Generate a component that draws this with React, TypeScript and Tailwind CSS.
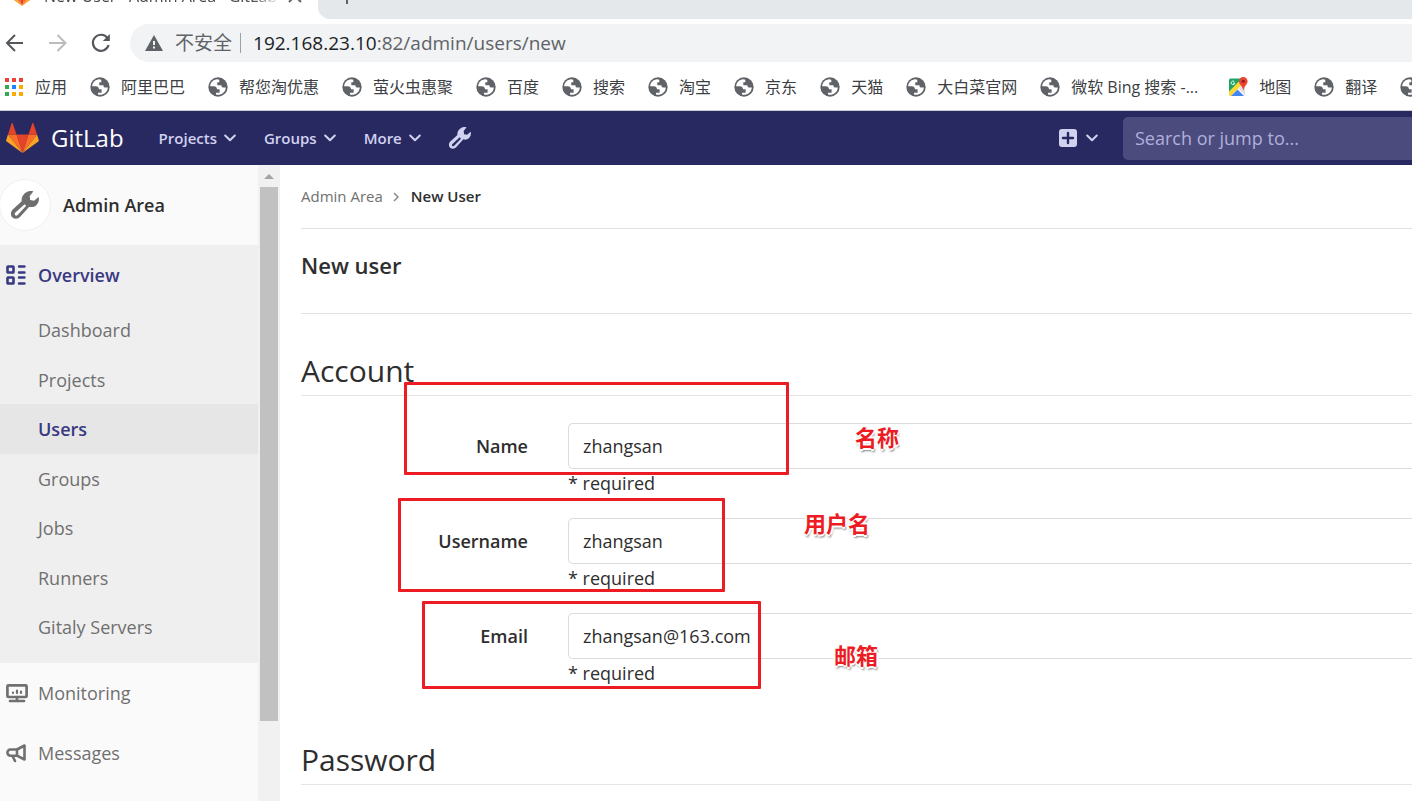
import type { ReactNode } from "react";
import clsx from "clsx";

type Bookmark = { label: string; icon?: "globe" | "maps"; wide?: boolean };

const bookmarks: Bookmark[] = [
  { label: "阿里巴巴" },
  { label: "帮您淘优惠" },
  { label: "萤火虫惠聚" },
  { label: "百度" },
  { label: "搜索" },
  { label: "淘宝" },
  { label: "京东" },
  { label: "天猫" },
  { label: "大白菜官网" },
  { label: "微软 Bing 搜索 -...", wide: true },
  { label: "地图", icon: "maps" },
  { label: "翻译" },
  { label: "新闻" },
];

const overviewLinks = ["Dashboard", "Projects", "Users", "Groups", "Jobs", "Runners", "Gitaly Servers"];

const appColors = [
  "#ea4335", "#ea4335", "#ea4335",
  "#34a853", "#1a85ff", "#f9ab00",
  "#34a853", "#f9ab00", "#f9ab00",
];

function GlobeIcon() {
  return (
    <svg viewBox="0 0 20 20" className="size-5 shrink-0" aria-hidden="true">
      <circle cx="10" cy="10" r="9.7" fill="#5f6368" />
      <path
        d="M9.2 2.2C5.300 2.400 2.200 5.600 2.200 9.300h3.500c1.900 0 3.300 1.200 3.300 3h2.600v3.400H8v1.900c4.700 1.200 9.600-2.300 9.800-7.200h-3c-.8 0-1.300-.6-1.300-1.400V8.200H9.300V5.300h2V3.200c0-.5-.9-.9-2.100-1z"
        fill="#fff"
      />
    </svg>
  );
}

function MapsIcon() {
  return (
    <svg viewBox="0 0 20 20" className="size-5 shrink-0" aria-hidden="true">
      <path d="M1 3a1.500 1.500 0 0 1 1.500-1.500H14L1 16z" fill="#1fa463" />
      <path d="M1 18V14.500L12.500 3l3 3L3 19H2a1 1 0 0 1-1-1z" fill="#fdd835" />
      <path d="M3 19l6.500-6.500L16 19z" fill="#4285f4" />
      <path d="M10.500 11.500L17 6v12.500z" fill="#dfe1e5" />
      <path d="M15.300 0a4.300 4.300 0 0 0-4.300 4.300c0 3.300 3.700 4.600 4.300 9.700.6-5.100 4.300-6.400 4.300-9.700A4.300 4.300 0 0 0 15.300 0z" fill="#ea4335" />
      <circle cx="15.300" cy="4.300" r="1.500" fill="#8c1f16" />
      <path d="M6.300 4.600A1.800 1.800 0 1 0 6.800 6.200H5" fill="none" stroke="#fff" strokeWidth=".9" />
    </svg>
  );
}

function Tanuki({ className }: { className?: string }) {
  return (
    <svg viewBox="0 0 36 33" className={className} aria-hidden="true">
      <path d="M18 33l6.600-20.400H11.400z" fill="#e24329" />
      <path d="M18 33l-6.600-20.400H2z" fill="#fc6d26" />
      <path d="M2 12.600L.1 18.700a1.400 1.400 0 0 0 .5 1.600L18 33z" fill="#fca326" />
      <path d="M2 12.600h9.400L7.300.5c-.2-.7-1.200-.7-1.400 0z" fill="#e24329" />
      <path d="M18 33l6.600-20.400H34z" fill="#fc6d26" />
      <path d="M34 12.600l1.900 6.100a1.400 1.400 0 0 1-.5 1.600L18 33z" fill="#fca326" />
      <path d="M34 12.600h-9.400L28.700.5c.2-.7 1.200-.7 1.400 0z" fill="#e24329" />
    </svg>
  );
}

function WrenchIcon({ className }: { className?: string }) {
  return (
    <svg viewBox="0 0 28 28" className={className} fill="currentColor" fillRule="evenodd" aria-hidden="true">
      <path d="M22.300.4l-3.600 4.700.5 4 3.900.7L27.600 6c1.200 4.100-1.200 8.900-5.400 9.900-1.500.3-2.700.2-3.900-.2l-8.900 9.900c-2.200 2.600-5.600 2.900-7.900.9-2.300-2.200-2.100-5.700.2-7.900l9-8.400C10.100 5.700 13.500 1.300 17.800.3c1.500-.3 3.100-.3 4.500.1zM13.600 13.200L4.400 21.600c-.9.9-.9 1.900-.2 2.600.7.600 1.700.600 2.400-.2l8.600-9.200z" />
    </svg>
  );
}

function OverviewIcon() {
  return (
    <svg viewBox="0 0 20 20" className="size-5 shrink-0" fill="none" stroke="currentColor" strokeWidth="2.600" strokeLinecap="round" aria-hidden="true">
      <rect x="1.500" y="1.500" width="6" height="6" rx=".6" />
      <rect x="1.500" y="12.500" width="6" height="6" rx=".6" />
      <path d="M13 1.500h5.500M13 7.500h5.500M13 12.500h5.500M13 18.500h5.500" strokeWidth="2.400" />
    </svg>
  );
}

function MonitorIcon() {
  return (
    <svg viewBox="0 0 22 20" className="h-5 w-[22px] shrink-0" fill="none" stroke="currentColor" strokeLinecap="round" aria-hidden="true">
      <rect x="1.400" y="2.400" width="19.200" height="11.600" rx="1" strokeWidth="2.700" />
      <path d="M11 14v3M4 18h14" strokeWidth="2.700" />
      <path d="M7 10v-.3M11 10V7.500M15 10V8.700" strokeWidth="2.200" />
    </svg>
  );
}

function MegaphoneIcon() {
  return (
    <svg viewBox="0 0 20 20" className="size-5 shrink-0" fill="none" stroke="currentColor" strokeWidth="2.600" strokeLinejoin="round" strokeLinecap="round" aria-hidden="true">
      <path d="M11 6.500L18.500 2.500v14L11 12.700z" />
      <path d="M11 6.500H4.500a2.500 2.500 0 0 0 0 6.200H11M6.500 13l2.500 5" />
    </svg>
  );
}

function ChevronDown() {
  return (
    <svg viewBox="0 0 12 8" className="h-2 w-3" fill="none" stroke="currentColor" strokeWidth="2" strokeLinecap="round" strokeLinejoin="round" aria-hidden="true">
      <path d="M1.200 1.500L6 6.300l4.800-4.800" />
    </svg>
  );
}

function BrowserChrome() {
  return (
    <div className="bg-white">
      <div className="flex h-[19px] overflow-hidden">
        <div className="flex w-[318px] shrink-0 items-start pl-3">
          <Tanuki className="-mt-3 h-[18px] w-5 shrink-0" />
          <span className="-mt-4 ml-3 w-[236px] overflow-hidden text-base leading-6 whitespace-nowrap text-[#45484c] [mask-image:linear-gradient(to_right,#000_88%,transparent)]">
            New User · Admin Area · GitLab
          </span>
          <button aria-label="Close tab" className="-mt-[11px] ml-2 text-[#5f6368]">
            <svg viewBox="0 0 14 14" className="size-3.5" stroke="currentColor" strokeWidth="2" aria-hidden="true">
              <path d="M1 1l12 12M13 1L1 13" />
            </svg>
          </button>
        </div>
        <div className="flex grow items-start rounded-bl-xl bg-[#e4e8eb] pl-[21px]">
          <button aria-label="New tab" className="-mt-3 text-[#5f6368]">
            <svg viewBox="0 0 16 16" className="size-4" stroke="currentColor" strokeWidth="2" aria-hidden="true">
              <path d="M8 0v16M0 8h16" />
            </svg>
          </button>
        </div>
      </div>

      <div className="flex items-center py-[5px] pl-[5px]">
        <button aria-label="Back" className="text-[#54575b]">
          <svg viewBox="0 0 20 20" className="size-5" fill="none" stroke="currentColor" strokeWidth="2" aria-hidden="true">
            <path d="M18 10H2M10 2l-8 8 8 8" />
          </svg>
        </button>
        <button aria-label="Forward" className="ml-[23px] text-[#babcbe]">
          <svg viewBox="0 0 20 20" className="size-5" fill="none" stroke="currentColor" strokeWidth="2" aria-hidden="true">
            <path d="M1 10h16M9.500 2l8 8-8 8" />
          </svg>
        </button>
        <button aria-label="Reload" className="ml-[23px] text-[#54575b]">
          <svg viewBox="0 0 20 20" className="size-5" fill="none" stroke="currentColor" strokeWidth="2.200" aria-hidden="true">
            <path d="M16.500 5.200A8 8 0 1 0 17.600 12" />
            <path d="M18.800 1v7h-7z" fill="currentColor" stroke="none" />
          </svg>
        </button>
        <div className="ml-[19px] flex h-[38px] grow items-center rounded-l-full bg-[#f1f3f4] pl-[15px] text-[19px] leading-6">
          <svg viewBox="0 0 18 16" className="h-4 w-[18px]" aria-hidden="true">
            <path d="M9 0l9 16H0z" fill="#5f6368" />
            <path d="M8 6h2v4H8zM8 11.500h2v2H8z" fill="#f1f3f4" />
          </svg>
          <span className="ml-3 text-[#5f6368]">不安全</span>
          <span className="ml-2 mr-3 h-5 w-px bg-[#9aa0a6]" />
          <span className="text-[#5f6368]">
            <span className="text-[#202124]">192.168.23.10</span>:82/admin/users/new
          </span>
        </div>
      </div>

      <nav aria-label="Bookmarks" className="flex h-[43px] items-center gap-[23px] overflow-hidden pb-1 pl-[5px] text-base text-[#3c4043]">
        <a href="#" className="flex shrink-0 items-center gap-3">
          <span className="grid grid-cols-3 gap-[3px]">
            {appColors.map((color, i) => (
              <span key={i} className="size-1" style={{ backgroundColor: color }} />
            ))}
          </span>
          应用
        </a>
        {bookmarks.map((bookmark) => (
          <a
            key={bookmark.label}
            href="#"
            className={clsx("flex shrink-0 items-center gap-[11px] whitespace-nowrap", bookmark.wide && "w-[165px]")}
          >
            {bookmark.icon === "maps" ? <MapsIcon /> : <GlobeIcon />}
            {bookmark.label}
          </a>
        ))}
      </nav>
    </div>
  );
}

function NavMenu({ label }: { label: string }) {
  return (
    <button className="flex items-center gap-[7px] text-[15px] font-semibold">
      {label}
      <ChevronDown />
    </button>
  );
}

function Header() {
  return (
    <header className="flex h-[55px] items-center overflow-hidden border-t border-[#c9cad6] bg-[#292961] pl-1.5 text-[#d1d1f0]">
      <a href="#" className="flex shrink-0 items-center gap-3 text-white">
        <Tanuki className="h-[30px] w-[33px]" />
        <span className="text-2xl">GitLab</span>
      </a>
      <nav aria-label="Main" className="ml-[35px] flex shrink-0 items-center gap-7">
        <NavMenu label="Projects" />
        <NavMenu label="Groups" />
        <NavMenu label="More" />
        <a href="#" aria-label="Admin Area">
          <WrenchIcon className="size-[22px]" />
        </a>
      </nav>
      <button aria-label="New..." className="ml-auto flex shrink-0 items-center gap-[9px]">
        <svg viewBox="0 0 18 18" className="size-[18px]" aria-hidden="true">
          <rect width="18" height="18" rx="3" fill="currentColor" />
          <path d="M9 4v10M4 9h10" stroke="#292961" strokeWidth="2.400" strokeLinecap="round" />
        </svg>
        <ChevronDown />
      </button>
      <input
        type="search"
        aria-label="Search or jump to"
        placeholder="Search or jump to..."
        className="ml-[25px] h-[43px] w-[289px] shrink-0 rounded-l-[5px] bg-[#4b4b7d] px-3 text-lg placeholder:text-[#b0b0dc]"
      />
    </header>
  );
}

function SidebarItem({ icon, label }: { icon: ReactNode; label: string }) {
  return (
    <a href="#" className="flex h-[60px] items-center text-lg text-[#707070]">
      <span className="flex w-8">{icon}</span>
      {label}
    </a>
  );
}

function Sidebar() {
  return (
    <aside className="w-[258px] shrink-0 bg-[#fafafa]">
      <a href="#" className="flex h-20 items-center gap-3 text-lg font-semibold text-[#2e2e2e]">
        <span className="-ml-px flex size-[52px] items-center justify-center rounded-full border border-[#f0f0f0] bg-white text-[#6e6e6e]">
          <WrenchIcon className="size-7" />
        </span>
        Admin Area
      </a>
      <div className="bg-[#efefef] pb-[11px]">
        <a href="#" className="flex h-[60px] items-center pl-1.5 text-lg font-semibold text-[#393982]">
          <span className="w-8">
            <OverviewIcon />
          </span>
          Overview
        </a>
        <ul className="text-lg">
          {overviewLinks.map((label) => (
            <li key={label} className="h-[50px] even:h-[49px]">
              <a
                href="#"
                className={clsx(
                  "flex h-full items-center pl-[38px]",
                  label === "Users" ? "bg-[#e6e6e6] font-semibold text-[#393982]" : "text-[#707070]",
                )}
              >
                {label}
              </a>
            </li>
          ))}
        </ul>
      </div>
      <div className="pl-1.5">
        <SidebarItem icon={<MonitorIcon />} label="Monitoring" />
        <SidebarItem icon={<MegaphoneIcon />} label="Messages" />
      </div>
    </aside>
  );
}

function ScrollTrack() {
  return (
    <div className="w-[22px] shrink-0 bg-[#f1f1f1] px-0.5" aria-hidden="true">
      <svg viewBox="0 0 18 22" className="h-[22px] w-[18px]">
        <path d="M4 14l5-5 5 5z" fill="#a3a3a3" />
      </svg>
      <div className="h-[534px] w-[18px] bg-[#c1c1c1]" />
    </div>
  );
}

type FieldProps = {
  id: string;
  label: string;
  value: string;
  type?: string;
  outline: string;
  note: string;
  notePosition: string;
};

function Field({ id, label, value, type = "text", outline, note, notePosition }: FieldProps) {
  return (
    <div className="relative flex text-lg text-[#2e2e2e]">
      <label htmlFor={id} className="w-[227px] shrink-0 pt-[9px] text-right leading-7 font-semibold">
        {label}
      </label>
      <div className="ml-10 grow">
        <input
          id={id}
          type={type}
          defaultValue={value}
          className="block h-[46px] w-full rounded-l-[5px] border border-r-0 border-[#dbdbdb] bg-white px-3.5"
        />
        <span className="block h-7 leading-7">* required</span>
      </div>
      {/* Annotation box and its caption lie over the row */}
      <div className={clsx("pointer-events-none absolute rounded-[1px] border-3 border-[#ed1c24]", outline)} />
      <span
        className={clsx(
          "pointer-events-none absolute text-[22px] leading-8 font-bold whitespace-nowrap text-[#ed1c24] [text-shadow:-2px_0_#fff,2px_0_#fff,0_-2px_#fff,0_2px_#fff,1px_3px_2px_#888]",
          notePosition,
        )}
      >
        {note}
      </span>
    </div>
  );
}

function Content() {
  return (
    <main className="min-w-0 grow pl-[21px] text-[#2e2e2e]">
      <nav aria-label="Breadcrumb" className="flex h-16 items-center border-b border-[#e1e1e1] text-[15px]">
        <a href="#" className="text-[#707070]">Admin Area</a>
        <svg viewBox="0 0 6 10" className="mr-3 ml-2.5 h-2.5 w-1.5" fill="none" stroke="#888" strokeWidth="1.500" aria-hidden="true">
          <path d="M1 1l4 4-4 4" />
        </svg>
        <a href="#" className="font-semibold">New User</a>
      </nav>
      <h3 className="flex h-[85px] items-center border-b border-[#e1e1e1] pb-3 text-[22px] font-semibold">New user</h3>

      <form>
        <fieldset>
          <legend className="w-full border-b border-[#e5e5e5] pt-[34px] pb-0.5 text-[30px] leading-[45px]">Account</legend>
          <div className="mt-[27px] flex flex-col gap-[21px]">
            <Field id="name" label="Name" value="zhangsan" outline="-top-[41px] left-[103px] h-[93px] w-[385px]" note="名称" notePosition="left-[554px] -top-0.5" />
            <Field id="username" label="Username" value="zhangsan" outline="-top-5 left-[97px] h-[94px] w-[327px]" note="用户名" notePosition="left-[503px] -top-[11px]" />
            <Field id="email" label="Email" value="zhangsan@163.com" type="email" outline="-top-3 left-[121px] h-[88px] w-[339px]" note="邮箱" notePosition="left-[533px] top-[26px]" />
          </div>
        </fieldset>
        <fieldset>
          <legend className="w-full border-b border-[#e5e5e5] pt-[50px] pb-0.5 text-[30px] leading-[45px]">Password</legend>
        </fieldset>
      </form>
    </main>
  );
}

export default function App() {
  return (
    <div className="h-screen overflow-hidden bg-white font-['Open_Sans','Noto_Sans_CJK_SC',sans-serif]">
      <BrowserChrome />
      <Header />
      <div className="flex min-h-screen">
        <Sidebar />
        <ScrollTrack />
        <Content />
      </div>
    </div>
  );
}
